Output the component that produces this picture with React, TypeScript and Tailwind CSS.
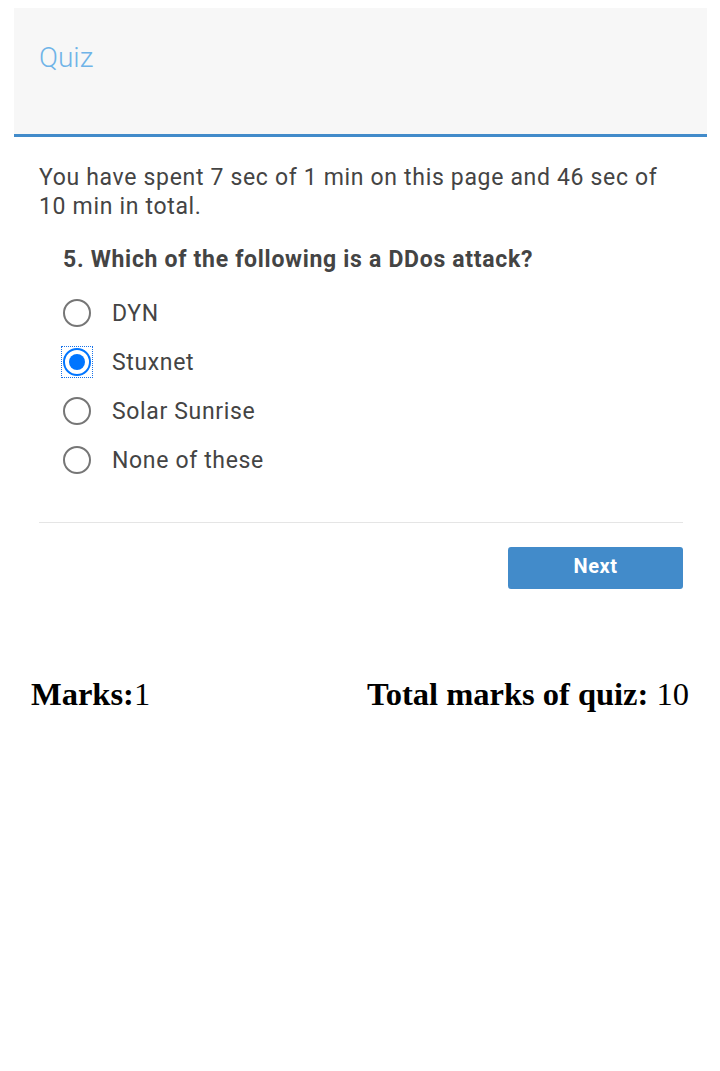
import React from "react";

const options = ["DYN", "Stuxnet", "Solar Sunrise", "None of these"];

function Radio({ checked }: { checked: boolean }) {
  if (checked) {
    return (
      <div className="w-[30px] h-[30px] shrink-0 flex items-center justify-center outline-1 outline-dotted outline-[#1a73e8]">
        <div className="w-[28px] h-[28px] rounded-full border-2 border-[#0075ff] flex items-center justify-center bg-white">
          <div className="w-[16px] h-[16px] rounded-full bg-[#0075ff]" />
        </div>
      </div>
    );
  }
  return (
    <div className="w-[30px] h-[30px] shrink-0 flex items-center justify-center">
      <div className="w-[28px] h-[28px] rounded-full border-2 border-[#767676] bg-white" />
    </div>
  );
}

export default function App() {
  return (
    <div className="bg-white min-h-[1071px] pt-2" style={{ fontFamily: "Roboto, sans-serif" }}>
      <div className="ml-[14px] mr-[13px]">
        <div className="bg-[#f7f7f7] h-[129px] border-b-[3px] border-[#428bca] pl-[25px] pt-[36px]">
          <h1 className="text-[28px] font-light text-[#6fb4e8] leading-none">Quiz</h1>
        </div>
        <div className="pl-[25px] pr-[24px] pt-[26px]">
          <p className="text-[23px] leading-[29px] tracking-[0.67px] text-[#444]">
            You have spent 7 sec of 1 min on this page and 46 sec of 10 min in total.
          </p>
          <div className="pl-[24px] pt-[24px]">
            <h2 className="text-[23px] font-bold tracking-[0.7px] text-[#444] leading-[29px]">
              5. Which of the following is a DDos attack?
            </h2>
            <div className="flex flex-col gap-[19px] pt-[24px]">
              {options.map((o, i) => (
                <label
                  key={o}
                  className="flex items-center gap-[20px] h-[30px] text-[23px] leading-[29px] tracking-[0.65px] text-[#444] -ml-[1px]"
                >
                  <Radio checked={i === 1} />
                  <span>{o}</span>
                </label>
              ))}
            </div>
          </div>
          <div className="border-t border-[#e5e5e5] mt-[47px]" />
          <div className="flex justify-end pt-[24px]">
            <button className="w-[175px] h-[42px] bg-[#428bca] rounded-[3px] text-white font-bold text-[20px] leading-[38px] pb-[4px] tracking-[0.5px]">
              Next
            </button>
          </div>
        </div>
      </div>
      <div
        className="flex justify-between px-[31px] mt-[87px] text-[32.5px] leading-[37px] text-black"
        style={{ fontFamily: "'Liberation Serif', serif" }}
      >
        <div>
          <b>Marks:</b>1
        </div>
        <div>
          <b>Total marks of quiz:</b> 10
        </div>
      </div>
    </div>
  );
}
